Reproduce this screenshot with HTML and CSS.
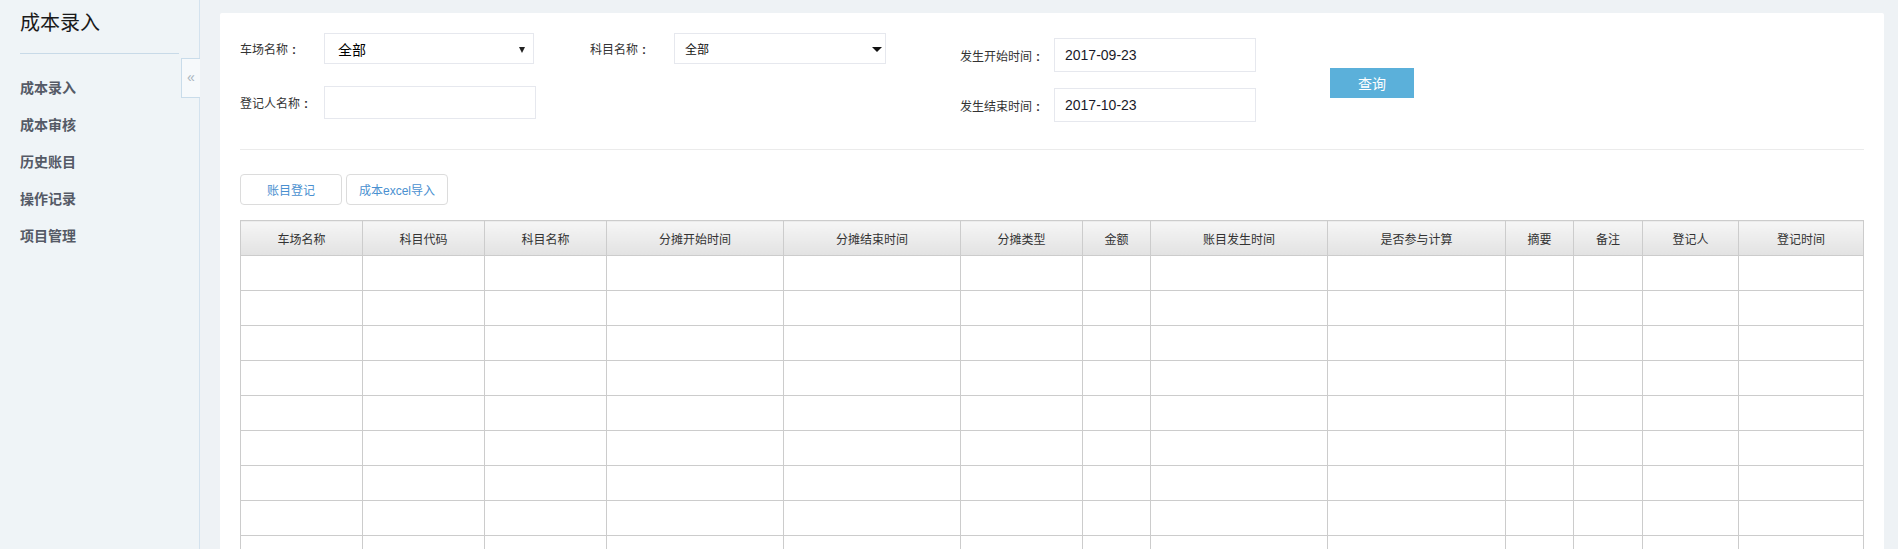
FILE: index.html
```html
<!DOCTYPE html>
<html lang="zh">
<head>
<meta charset="utf-8">
<title>成本录入</title>
<link rel="stylesheet" href="styles.css">
</head>
<body>
<div class="layout">
  <aside class="sidebar">
    <h1 class="side-title">成本录入</h1>
    <div class="side-divider"></div>
    <ul class="nav">
      <li>成本录入</li>
      <li>成本审核</li>
      <li>历史账目</li>
      <li>操作记录</li>
      <li>项目管理</li>
    </ul>
    <div class="collapse">&laquo;</div>
  </aside>
  <main class="main">
    <div class="card">
      <div class="filters">
        <div class="col col1">
          <div class="field">
            <span class="label">车场名称<span class="colon">:</span></span>
            <div class="select sel-a"><span>全部</span><i class="caret-s"></i></div>
          </div>
          <div class="field">
            <span class="label">登记人名称<span class="colon">:</span></span>
            <div class="input inp-a"></div>
          </div>
        </div>
        <div class="col col2">
          <div class="field">
            <span class="label">科目名称<span class="colon">:</span></span>
            <div class="select sel-b"><span>全部</span><i class="caret-b"></i></div>
          </div>
        </div>
        <div class="col col3">
          <div class="field">
            <span class="label lbl3">发生开始时间<span class="colon">:</span></span>
            <div class="input inp-date">2017-09-23</div>
          </div>
          <div class="field">
            <span class="label lbl3">发生结束时间<span class="colon">:</span></span>
            <div class="input inp-date">2017-10-23</div>
          </div>
        </div>
        <button class="btn-query">查询</button>
      </div>
      <div class="divider"></div>
      <div class="actions">
        <button class="btn-line">账目登记</button>
        <button class="btn-line">成本excel导入</button>
      </div>
      <table class="grid">
        <colgroup>
          <col class="w122"><col class="w122"><col class="w122">
          <col class="w177"><col class="w177"><col class="w122">
          <col class="w68"><col class="w177"><col class="w178">
          <col class="w68"><col class="w69"><col class="w96">
          <col class="w125">
        </colgroup>
        <thead>
          <tr>
            <th>车场名称</th><th>科目代码</th><th>科目名称</th><th>分摊开始时间</th><th>分摊结束时间</th><th>分摊类型</th><th>金额</th><th>账目发生时间</th><th>是否参与计算</th><th>摘要</th><th>备注</th><th>登记人</th><th>登记时间</th>
          </tr>
        </thead>
        <tbody>
          <tr><td></td><td></td><td></td><td></td><td></td><td></td><td></td><td></td><td></td><td></td><td></td><td></td><td></td></tr>
          <tr><td></td><td></td><td></td><td></td><td></td><td></td><td></td><td></td><td></td><td></td><td></td><td></td><td></td></tr>
          <tr><td></td><td></td><td></td><td></td><td></td><td></td><td></td><td></td><td></td><td></td><td></td><td></td><td></td></tr>
          <tr><td></td><td></td><td></td><td></td><td></td><td></td><td></td><td></td><td></td><td></td><td></td><td></td><td></td></tr>
          <tr><td></td><td></td><td></td><td></td><td></td><td></td><td></td><td></td><td></td><td></td><td></td><td></td><td></td></tr>
          <tr><td></td><td></td><td></td><td></td><td></td><td></td><td></td><td></td><td></td><td></td><td></td><td></td><td></td></tr>
          <tr><td></td><td></td><td></td><td></td><td></td><td></td><td></td><td></td><td></td><td></td><td></td><td></td><td></td></tr>
          <tr><td></td><td></td><td></td><td></td><td></td><td></td><td></td><td></td><td></td><td></td><td></td><td></td><td></td></tr>
          <tr><td></td><td></td><td></td><td></td><td></td><td></td><td></td><td></td><td></td><td></td><td></td><td></td><td></td></tr>
        </tbody>
      </table>
    </div>
  </main>
</div>
</body>
</html>
```
FILE: styles.css
```css
* { box-sizing: border-box; }
html, body { margin: 0; padding: 0; height: 100%; overflow: hidden; }
body {
  font-family: "Liberation Sans", "Noto Sans CJK SC", sans-serif;
  background: #eef2f5;
  color: #333;
}
.layout { display: flex; height: 549px; }

.sidebar {
  position: relative;
  width: 200px;
  flex: none;
  background: #eff4f7;
  border-right: 1px solid #d3e2ee;
  padding: 0 20px;
}
.side-title {
  margin: 0;
  padding-top: 9px;
  height: 48px;
  font-size: 20px;
  font-weight: normal;
  color: #1a1a1a;
  line-height: 28px;
}
.side-divider {
  margin-top: 5px;
  width: 159px;
  height: 1px;
  background: #c8dae8;
}
.nav { list-style: none; margin: 0; padding: 23px 0 0; }
.nav li {
  height: 37px;
  line-height: 22px;
  font-size: 14px;
  font-weight: bold;
  color: #555a66;
}
.collapse {
  position: absolute;
  left: 181px;
  top: 58px;
  width: 19px;
  height: 40px;
  background: #f6f9fb;
  border: 1px solid #c9dcea;
  border-right: none;
  color: #a9b4bd;
  font-size: 14px;
  line-height: 36px;
  text-align: center;
}

.main { flex: 1; padding: 13px 15px 0 20px; }
.card {
  background: #fff;
  border-radius: 2px 2px 0 0;
  height: 100%;
  padding: 20px 20px 0 20px;
}

.filters { display: flex; align-items: flex-start; }
.col { display: flex; flex-direction: column; }
.col1 { width: 350px; gap: 22px; }
.col2 { width: 370px; }
.col3 { padding-top: 5px; gap: 16px; }
.field { display: flex; align-items: center; }
.label {
  width: 84px;
  flex: none;
  font-size: 12px;
  color: #333;
  white-space: nowrap;
}
.colon {
  display: inline-block;
  width: 12px;
  text-align: center;
  font-weight: bold;
}
.lbl3 { width: 94px; }

.select, .input {
  border: 1px solid #e6e8ee;
  background: #fff;
  position: relative;
  display: flex;
  align-items: center;
}
.sel-a { width: 210px; height: 31px; padding-left: 13px; font-size: 14px; color: #000; }
.sel-b { width: 212px; height: 31px; padding-left: 10px; font-size: 12px; color: #111; }
.inp-a { width: 212px; height: 33px; }
.inp-date { width: 202px; height: 34px; padding-left: 10px; font-size: 14px; color: #1a1a2a; }

.caret-s {
  position: absolute;
  right: 8px;
  top: 13px;
  border-left: 3px solid transparent;
  border-right: 3px solid transparent;
  border-top: 6px solid #222;
}
.caret-b {
  position: absolute;
  right: 3px;
  top: 13px;
  border-left: 5px solid transparent;
  border-right: 5px solid transparent;
  border-top: 5px solid #111;
}

.btn-query {
  margin: 35px 0 0 74px;
  width: 84px;
  height: 30px;
  border: none;
  background: #5bb0da;
  color: #fff;
  font-family: inherit;
  font-size: 14px;
  padding: 0;
}

.divider { margin-top: 27px; height: 1px; background: #ebebeb; }

.actions { display: flex; gap: 4px; margin-top: 24px; }
.btn-line {
  width: 102px;
  height: 31px;
  border: 1px solid #dcdcdc;
  border-radius: 4px;
  background: #fff;
  color: #4a90d0;
  font-family: inherit;
  font-size: 12px;
  padding: 0;
}

.grid {
  margin-top: 15px;
  border-collapse: collapse;
  table-layout: fixed;
  width: 1623px;
}
.w68 { width: 68px; }
.w69 { width: 69px; }
.w96 { width: 96px; }
.w122 { width: 122px; }
.w125 { width: 125px; }
.w177 { width: 177px; }
.w178 { width: 178px; }
.grid th, .grid td {
  border: 1px solid #cccccc;
  height: 35px;
  padding: 0;
}
.grid th {
  font-size: 12px;
  font-weight: normal;
  color: #333;
  background: linear-gradient(#f6f6f6, #e2e2e2);
}
```
